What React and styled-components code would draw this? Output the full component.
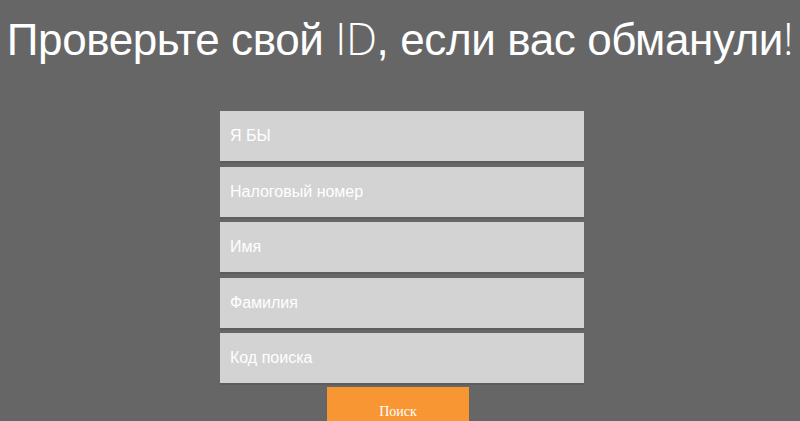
import styled, { createGlobalStyle } from "styled-components";

const GlobalStyle = createGlobalStyle`
  html, body {
    margin: 0;
    padding: 0;
    background: #666666;
    overflow: hidden;
  }
`;

const Page = styled.main`
  width: 800px;
  height: 421px;
  display: flex;
  flex-direction: column;
  align-items: center;
  font-family: "Liberation Sans", Arial, sans-serif;
`;

const Title = styled.h1`
  margin: 8px 0 0;
  font-size: 44px;
  font-weight: 400;
  letter-spacing: -0.4px;
  line-height: 60px;
  color: #ffffff;
  white-space: nowrap;
  text-align: center;

  span {
    font-family: "Open Sans", "Liberation Sans", sans-serif;
    font-weight: 300;
  }
`;

const Form = styled.form`
  margin-top: 41px;
  margin-left: 4px;
  width: 364px;
  display: flex;
  flex-direction: column;
  align-items: center;
`;

const Input = styled.input`
  box-sizing: border-box;
  width: 100%;
  height: 52px;
  margin-bottom: 3.5px;
  padding: 0 10px;
  border: none;
  border-bottom: 2px solid #5d5d5d;
  outline: none;
  background: #d3d3d3;
  font-family: "Liberation Sans", Arial, sans-serif;
  font-size: 16px;
  color: #ffffff;

  &::placeholder {
    color: #ffffff;
    opacity: 1;
  }
`;

const SearchButton = styled.button`
  margin: -1.5px 8px 0 0;
  width: 142px;
  height: 50px;
  padding: 0;
  border: none;
  background: #f79633;
  color: #ffffff;
  font-family: "Liberation Serif", "Times New Roman", serif;
  font-size: 14px;
  cursor: pointer;
`;

const fields = ["Я БЫ", "Налоговый номер", "Имя", "Фамилия", "Код поиска"];

const App = () => {
  return (
    <>
      <GlobalStyle />
      <Page>
        <Title>
          Проверьте свой <span>ID</span>, если вас обманули<span>!</span>
        </Title>
        <Form onSubmit={(e) => e.preventDefault()}>
          {fields.map((f) => (
            <Input key={f} type="text" placeholder={f} />
          ))}
          <SearchButton type="submit">Поиск</SearchButton>
        </Form>
      </Page>
    </>
  );
};

export default App;
